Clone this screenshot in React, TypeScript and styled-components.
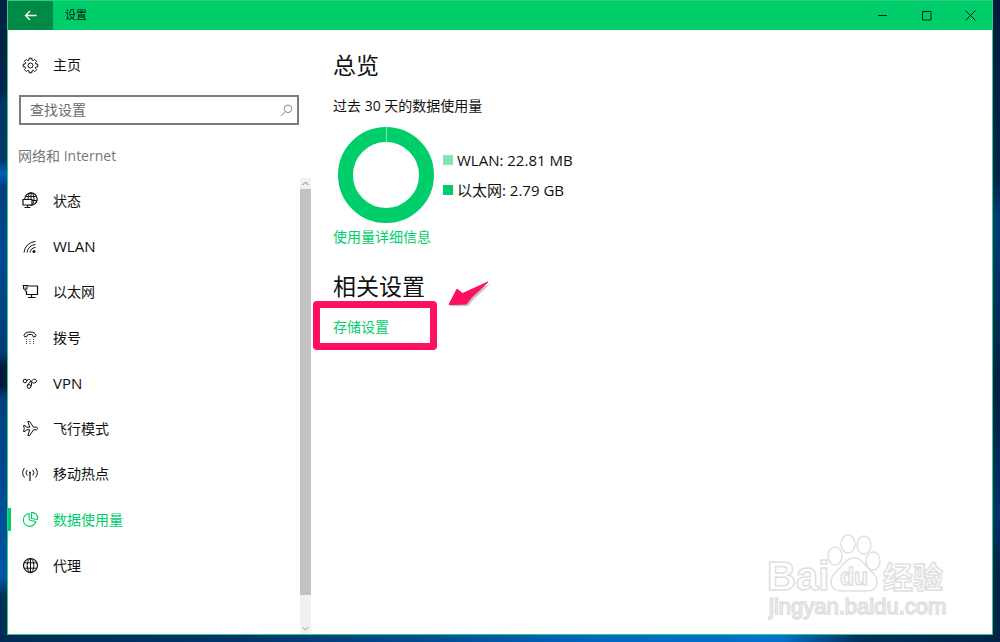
import React from "react";
import styled, { createGlobalStyle } from "styled-components";

const GREEN = "#00ce6b";
const PINK = "#ff0f5f";

const GlobalStyle = createGlobalStyle`
  *, *::before, *::after { box-sizing: border-box; }
  body { margin: 0; }
  body, button, input {
    font-family: "Open Sans", "Noto Sans CJK SC", sans-serif;
    font-size: 14px;
    line-height: 20px;
    color: #111;
  }
`;

const Desktop = styled.div`
  display: flex;
  height: 100vh;
  padding: 0 7px 7px;
  background:
    linear-gradient(90deg, #002a55 0%, #00366c 25%, #004c90 42%, #0068c0 60%, #0072cc 78%, #002f5c 86%, #002448 100%) bottom / 100% 7px no-repeat,
    linear-gradient(180deg, #002044 0, #00254c 14%, #003464 16%, #003868 25%, #0060b4 27%, #003f80 29%, #004a90 40%, #003c78 55%, #001a3c 57%, #001a3c 60%, #003f80 62%, #0056a4 90%, #002f58 93%) left / 7px 100% no-repeat,
    linear-gradient(180deg, #001c40 0, #00264c 28%, #003c74 34%, #00284e 55%, #001f44 60%, #003468 80%, #002448 90%);
`;

const Window = styled.div`
  position: relative;
  flex: 1;
  min-width: 0;
  display: flex;
  flex-direction: column;
  background: #fff;
  border: 1px solid #2fcf80;
`;

const TitleBar = styled.header`
  flex: none;
  display: flex;
  height: 29px;
  background: ${GREEN};
`;

const BackButton = styled.button`
  width: 45px;
  border: 0;
  padding: 0;
  display: grid;
  place-items: center;
  background: #008a45;
`;

const Title = styled.span`
  flex: 1;
  padding-left: 12px;
  font-size: 11px;
  line-height: 28px;
  color: #04210f;
`;

const CaptionButton = styled.button`
  width: 44px;
  border: 0;
  padding: 0;
  display: grid;
  place-items: center;
  background: transparent;
`;

const Body = styled.div`
  flex: 1;
  min-height: 0;
  display: flex;
`;

const Sidebar = styled.aside`
  flex: none;
  width: 303px;
  display: flex;
  flex-direction: column;
`;

const HomeLink = styled.a`
  display: flex;
  align-items: center;
  gap: 14px;
  height: 40px;
  margin: 15px 0 10px;
  padding-left: 14px;
  color: inherit;
  text-decoration: none;
`;

const SearchBox = styled.label`
  display: flex;
  align-items: center;
  height: 30px;
  margin: 0 12px 0 11px;
  padding: 0 4px 0 9px;
  border: 2px solid #7c7c7c;
`;

const SearchInput = styled.input`
  flex: 1;
  min-width: 0;
  border: 0;
  padding: 0;
  outline: 0;
  background: transparent;
  &::placeholder { color: #6c6c6c; opacity: 1; }
`;

const GroupTitle = styled.h2`
  margin: 21px 0 12px 10px;
  font-size: 14px;
  line-height: 20px;
  font-weight: 400;
  color: #767676;
`;

const NavArea = styled.div`
  flex: 1;
  min-height: 0;
  display: flex;
`;

const NavList = styled.nav`
  flex: 1;
  display: flex;
  flex-direction: column;
  overflow: hidden;
`;

const NavItem = styled.a<{ $active?: boolean; $latin?: boolean }>`
  flex: 0 0 10%;
  min-height: 32px;
  display: flex;
  align-items: center;
  gap: 14px;
  padding-left: 14px;
  font-size: ${(p) => (p.$latin ? 15 : 14)}px;
  color: ${(p) => (p.$active ? GREEN : "inherit")};
  text-decoration: none;
  background: ${(p) => (p.$active ? `linear-gradient(${GREEN}, ${GREEN}) left / 3px 23px no-repeat` : "none")};
`;

const ScrollTrack = styled.div`
  width: 11px;
  display: flex;
  flex-direction: column;
  background: #f1f1f1;
`;

const ScrollButton = styled.button`
  flex: none;
  height: 11px;
  border: 0;
  padding: 0;
  display: grid;
  place-items: center;
  background: transparent;
`;

const ScrollThumb = styled.div`
  flex: 0 0 89%;
  background: #c2c2c2;
`;

const ScrollRoom = styled.div`
  flex: 1;
`;

const Content = styled.main`
  flex: 1;
  min-width: 0;
  padding: 19px 22px;
`;

const Heading = styled.h1`
  margin: 0;
  font-size: 23px;
  line-height: 32px;
  font-weight: 400;
`;

const Caption = styled.p`
  margin: 15px 0 11px;
`;

const Usage = styled.div`
  display: flex;
  align-items: center;
  gap: 9px;
  margin-left: 5px;
`;

const Legend = styled.ul`
  margin: 0;
  padding: 0;
  list-style: none;
  display: grid;
  gap: 10px;
  font-size: 15px;
`;

const LegendItem = styled.li<{ $color: string }>`
  display: flex;
  align-items: center;
  gap: 4px;
  &::before {
    content: "";
    width: 10px;
    height: 10px;
    background: ${(p) => p.$color};
  }
`;

const ActionLink = styled.a`
  display: block;
  width: max-content;
  color: ${GREEN};
  text-decoration: none;
`;

const UsageLink = styled(ActionLink)`
  margin: 4px 0 23px;
`;

const Related = styled.div`
  position: relative;
  width: max-content;
  padding-top: 15px;
`;

const Frame = styled.div`
  position: absolute;
  top: -1px;
  left: -20px;
  width: 124px;
  height: 49px;
  border: 7px solid ${PINK};
  border-radius: 4px;
  pointer-events: none;
`;

const Pointer = styled.svg`
  position: absolute;
  left: 112px;
  top: -25px;
`;

const Watermark = styled.svg`
  position: absolute;
  right: 42px;
  bottom: 10px;
  pointer-events: none;
`;

const Icon = styled.svg.attrs({ width: 17, height: 17, viewBox: "0 0 17 17", fill: "none", stroke: "currentColor" })`
  flex: none;
  display: block;
`;

const gearPath = Array.from({ length: 8 }, (_, i) => {
  const point = (r: number, deg: number) => {
    const a = ((i * 45 + deg) * Math.PI) / 180;
    return `${(8.5 + r * Math.cos(a)).toFixed(2)} ${(8.5 + r * Math.sin(a)).toFixed(2)}`;
  };
  return `${i ? "L" : "M"}${point(5.6, -15)} L${point(7.4, -11)} L${point(7.4, 11)} L${point(5.6, 15)}`;
}).join(" ") + "Z";

const icons: Record<string, React.ReactNode> = {
  status: (
    <>
      <circle cx="9" cy="7" r="6.200" strokeWidth="1.200" />
      <ellipse cx="9" cy="7" rx="3" ry="6.200" />
      <path d="M9 1v12M3.500 4.500h11M3 8.500h12" />
      <path d="M1 7.500h9v5.500H1z" fill="#fff" strokeWidth="1.200" />
      <path d="M2.500 15.500h6M5.500 13v2.500" strokeWidth="1.200" />
    </>
  ),
  wlan: (
    <>
      <path d="M2 14.500A12 12 0 0 1 13.500 3.500M5 14.500A9 9 0 0 1 13.500 6.500M8 14.500A6 6 0 0 1 13.500 9.500" />
      <circle cx="12" cy="13.500" r="1.500" fill="currentColor" stroke="none" />
    </>
  ),
  ethernet: (
    <>
      <path d="M6 3H15.500v8.500H4.500V8M9.500 11.500v3M6 14.500h7.500" strokeWidth="1.200" />
      <path d="M.5 2.500h5.500M1.500 2.500v3.500h3.500v-3.500M3.200 6v2h1.300" />
      <path d="M2.500 4.200h1.500" strokeOpacity=".6" />
    </>
  ),
  dialup: (
    <>
      <path d="M2 6.500C2.500 1.800 13.500 1.800 14 6.500L13.500 7.700h-2.300l-.8-1.900c-1.400-.5-3.400-.5-4.800 0l-.8 1.900H2.500z" />
      <path d="M4 10.500h1M7.500 10.500h1M11 10.500h1M4 12.500h1M7.500 12.500h1M11 12.500h1M4 14.500h1M7.500 14.500h1M11 14.500h1" strokeOpacity=".75" />
    </>
  ),
  vpn: (
    <>
      <circle cx="3" cy="6" r="1.800" />
      <circle cx="7" cy="11.500" r="1.900" />
      <path d="M4.800 6C6 3.800 8.500 4 8.500 6C8.500 7.500 6 8.500 5.300 10.500M8.900 11.500C10.500 10.500 8.500 7.500 10 5.500C11.500 3.500 14.500 4 14.500 6S11.500 8.500 10 7.500" />
    </>
  ),
  airplane: (
    <path d="M1.500 5.500h1.600l1.300 1.700h3.400L5.800 1.500h1.900l3.800 5.700h2.600c2 0 2 2.600 0 2.600h-2.600l-3.800 5.700H5.800l2-5.700H4.400l-1.300 1.700H1.500l.8-3z" />
  ),
  hotspot: (
    <>
      <path d="M8 7v8" strokeWidth="1.200" />
      <circle cx="8" cy="6.500" r="1" fill="currentColor" stroke="none" />
      <path d="M5.300 4a4 4 0 0 0 0 5.500M10.700 4a4 4 0 0 1 0 5.500M2.500 2a7 7 0 0 0 0 9.500M13.500 2a7 7 0 0 1 0 9.500" />
    </>
  ),
  usage: (
    <path d="M7 2.700A6.300 6.300 0 1 0 13.800 10.500L7.300 9zM9.500 1.300V7.500L15.500 8.500C16.300 4.500 13.500 1.300 9.500 1.300z" strokeWidth="1.200" strokeLinejoin="round" />
  ),
  proxy: (
    <>
      <circle cx="8.500" cy="8.500" r="7" strokeWidth="1.200" />
      <ellipse cx="8.500" cy="8.500" rx="3.300" ry="7" />
      <path d="M8.500 1.500v14M2.200 5.800h12.600M2.200 11.200h12.600" />
    </>
  ),
};

const navItems = [
  { icon: "status", label: "状态" },
  { icon: "wlan", label: "WLAN", latin: true },
  { icon: "ethernet", label: "以太网" },
  { icon: "dialup", label: "拨号" },
  { icon: "vpn", label: "VPN", latin: true },
  { icon: "airplane", label: "飞行模式" },
  { icon: "hotspot", label: "移动热点" },
  { icon: "usage", label: "数据使用量", active: true },
  { icon: "proxy", label: "代理" },
];

export default function App() {
  return (
    <Desktop>
      <GlobalStyle />
      <Window>
        <TitleBar>
          <BackButton aria-label="返回">
            <svg width="13" height="11" viewBox="0 0 13 11" fill="none" stroke="#fff" strokeWidth="1.300">
              <path d="M12.500 5.500H1.500M6 1L1.500 5.500L6 10" />
            </svg>
          </BackButton>
          <Title>设置</Title>
          <CaptionButton aria-label="最小化">
            <svg width="11" height="11" stroke="#04210f"><path d="M1 5.500h9" /></svg>
          </CaptionButton>
          <CaptionButton aria-label="最大化">
            <svg width="11" height="11" stroke="#04210f" fill="none"><path d="M1.500 1.500h8.500v8.500h-8.500z" /></svg>
          </CaptionButton>
          <CaptionButton aria-label="关闭">
            <svg width="11" height="11" stroke="#04210f"><path d="M.5 .5l10 10M10.500 .5l-10 10" /></svg>
          </CaptionButton>
        </TitleBar>
        <Body>
          <Sidebar>
            <HomeLink href="#home">
              <Icon>
                <path d={gearPath} strokeLinejoin="round" />
                <circle cx="8.500" cy="8.500" r="2.500" />
              </Icon>
              主页
            </HomeLink>
            <SearchBox>
              <SearchInput type="text" placeholder="查找设置" aria-label="查找设置" />
              <svg width="13" height="13" viewBox="0 0 13 13" fill="none" stroke="#8a8a8a">
                <circle cx="8" cy="4.800" r="3.800" />
                <path d="M5.200 7.600L.8 12.200" />
              </svg>
            </SearchBox>
            <GroupTitle>网络和 Internet</GroupTitle>
            <NavArea>
              <NavList>
                {navItems.map((item) => (
                  <NavItem key={item.icon} href={`#${item.icon}`} $active={item.active} $latin={item.latin}>
                    <Icon>{icons[item.icon]}</Icon>
                    {item.label}
                  </NavItem>
                ))}
              </NavList>
              <ScrollTrack>
                <ScrollButton aria-label="向上滚动">
                  <svg width="7" height="5" fill="none" stroke="#777"><path d="M.5 4l3-3l3 3" /></svg>
                </ScrollButton>
                <ScrollThumb />
                <ScrollRoom />
                <ScrollButton aria-label="向下滚动">
                  <svg width="7" height="5" fill="none" stroke="#999"><path d="M.5 1l3 3l3-3" /></svg>
                </ScrollButton>
              </ScrollTrack>
            </NavArea>
          </Sidebar>
          <Content>
            <Heading>总览</Heading>
            <Caption>过去 30 天的数据使用量</Caption>
            <Usage>
              <svg width="96" height="96" viewBox="0 0 96 96" fill="none">
                <circle cx="48" cy="48" r="40.500" stroke={GREEN} strokeWidth="15" />
                <path d="M48.500 0v15" stroke="#7fe6b5" />
              </svg>
              <Legend>
                <LegendItem $color="#7fe6b5">WLAN: 22.81 MB</LegendItem>
                <LegendItem $color={GREEN}>以太网: 2.79 GB</LegendItem>
              </Legend>
            </Usage>
            <UsageLink href="#details">使用量详细信息</UsageLink>
            <Heading as="h2">相关设置</Heading>
            <Related>
              <ActionLink href="#storage">存储设置</ActionLink>
              <Frame />
              <Pointer width="48" height="34" viewBox="0 0 48 34">
                <path d="M5 29L14 14L19 18L45 7L28 23L23 29z" fill="#888" opacity=".5" />
                <path d="M4 27.500L12 12L17.500 16.500L43 5L26 21L21.500 27z" fill={PINK} stroke={PINK} strokeLinejoin="round" />
              </Pointer>
            </Related>
          </Content>
        </Body>
        <Watermark width="182" height="92" viewBox="0 0 182 92" fill="#fff" stroke="#e0e0e0" strokeWidth="1.500" fontFamily='"Liberation Sans", "Noto Sans CJK SC", sans-serif' fontWeight="700">
          <text x="-1" y="58" fontSize="40">Bai</text>
          <ellipse cx="67" cy="24" rx="7" ry="9" />
          <ellipse cx="80" cy="12" rx="7" ry="9" />
          <ellipse cx="96" cy="13" rx="7" ry="9" />
          <ellipse cx="105" cy="29" rx="7" ry="9" />
          <path d="M86 26C94 26 96 33 103 39C113 48 110 59 99 59H74C62 59 59 48 69 39C76 33 78 26 86 26z" />
          <text x="72" y="53" fontSize="23">du</text>
          <text x="115" y="56" fontSize="30">经验</text>
          <text x="1" y="82" fontSize="22" fontWeight="400">jingyan.baidu.com</text>
        </Watermark>
      </Window>
    </Desktop>
  );
}
